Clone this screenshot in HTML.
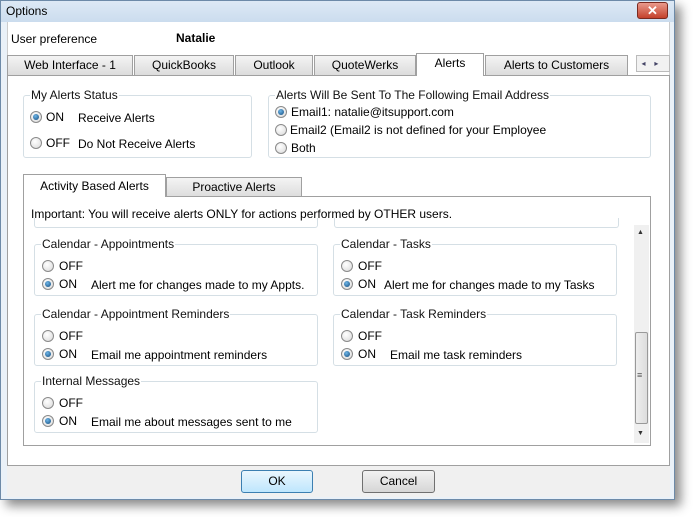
<!DOCTYPE html><html><head><style>
*{box-sizing:border-box}
body{margin:0;width:693px;height:517px;background:#fff;font-family:"Liberation Sans",sans-serif;font-size:12px;color:#000;position:relative;overflow:hidden}
.a{position:absolute}
.win{left:0;top:0;width:675px;height:500px;background:#eaf1f8;border:1px solid #6d8aa8;box-shadow:6px 6px 10px rgba(0,0,0,.45)}
.g{position:absolute;border:1px solid #d5dfe5;border-radius:3px}
.lg{position:absolute;top:-8px;left:6px;background:#fff;padding:0 1px;font-size:12px;color:#111}
.r{position:absolute;width:12px;height:12px;border-radius:50%;border:1px solid #8a8a8a;background:radial-gradient(circle at 40% 35%,#fff,#d8d8d8)}
.r.on::after{content:"";position:absolute;left:2px;top:2px;width:6px;height:6px;border-radius:50%;background:radial-gradient(circle at 40% 35%,#6fb6e8,#104a7c)}
.t{position:absolute;white-space:nowrap}
.tab{position:absolute;height:20px;border:1px solid #a0a0a0;border-bottom:none;background:linear-gradient(#f4f4f4,#dcdcdc);text-align:center;line-height:19px;font-size:12px}
.btn{position:absolute;height:23px;border:1px solid #707070;border-radius:3px;background:linear-gradient(#f2f2f2,#d6d6d6);text-align:center;line-height:21px}
</style></head><body>
<div class="a win"></div>
<div class="a" style="left:1px;top:1px;width:673px;height:21px;background:linear-gradient(#dde9f5,#cbdcee)"></div>
<div class="t" style="left:6px;top:4px">Options</div>
<div class="a" style="left:637px;top:2px;width:31px;height:17px;border:1px solid #7a2a20;border-radius:3px;background:linear-gradient(#e99a8c,#c4412c);color:#fff;text-align:center;font-weight:bold;line-height:15px;font-size:13px">✕</div>
<div class="a" style="left:7px;top:22px;width:663px;height:443px;background:#fff;border-left:1px solid #ccc;border-right:1px solid #ccc"></div>
<div class="a" style="left:7px;top:465px;width:663px;height:32px;background:#f0f0f0;border-top:1px solid #a0a0a0"></div>
<div class="t" style="left:11px;top:32px">User preference</div>
<div class="t" style="left:176px;top:31px;font-weight:bold">Natalie</div>
<div class="tab" style="left:7px;top:55px;width:126px">Web Interface - 1</div>
<div class="tab" style="left:134px;top:55px;width:100px">QuickBooks</div>
<div class="tab" style="left:235px;top:55px;width:78px">Outlook</div>
<div class="tab" style="left:314px;top:55px;width:102px">QuoteWerks</div>
<div class="tab" style="left:416px;top:53px;width:68px;height:23px;background:#fff;z-index:2">Alerts</div>
<div class="tab" style="left:485px;top:55px;width:143px">Alerts to Customers</div>
<div class="a" style="left:636px;top:55px;width:34px;height:17px;border:1px solid #bbb;background:#f2f2f2;font-size:8px;color:#446;line-height:15px">&nbsp;&nbsp;◂&nbsp;&nbsp;&nbsp;&nbsp;▸</div>
<div class="a" style="left:7px;top:75px;width:663px;height:391px;border:1px solid #a0a0a0;border-bottom:none"></div>

<div class="g" style="left:23px;top:95px;width:229px;height:63px"><span class="lg">My Alerts Status</span></div>
<div class="r on" style="left:30px;top:111px"></div><div class="t" style="left:46px;top:110px">ON</div><div class="t" style="left:78px;top:111px">Receive Alerts</div>
<div class="r" style="left:30px;top:137px"></div><div class="t" style="left:46px;top:136px">OFF</div><div class="t" style="left:78px;top:137px">Do Not Receive Alerts</div>

<div class="g" style="left:268px;top:95px;width:383px;height:63px"><span class="lg">Alerts Will Be Sent To The Following Email Address</span></div>
<div class="r on" style="left:275px;top:106px"></div><div class="t" style="left:291px;top:105px">Email1: natalie@itsupport.com</div>
<div class="r" style="left:275px;top:124px"></div><div class="t" style="left:290px;top:123px">Email2 (Email2 is not defined for your Employee</div>
<div class="r" style="left:275px;top:142px"></div><div class="t" style="left:291px;top:141px">Both</div>

<div class="tab" style="left:23px;top:174px;width:143px;height:23px;background:#fff;z-index:2;line-height:22px">Activity Based Alerts</div>
<div class="tab" style="left:166px;top:177px;width:136px">Proactive Alerts</div>
<div class="a" style="left:23px;top:196px;width:628px;height:250px;border:1px solid #a0a0a0"></div>
<div class="t" style="left:31px;top:207px">Important: You will receive alerts ONLY for actions performed by OTHER users.</div>
<div class="a" style="left:34px;top:218px;width:284px;height:10px;border:1px solid #d5dfe5;border-top:none;border-radius:0 0 3px 3px"></div>
<div class="a" style="left:334px;top:218px;width:285px;height:10px;border:1px solid #d5dfe5;border-top:none;border-radius:0 0 3px 3px"></div>
<div class="a" style="left:634px;top:225px;width:15px;height:218px;background:#f0f0f0"></div>
<div class="t" style="left:637px;top:229px;font-size:7px;color:#333">▲</div>
<div class="t" style="left:637px;top:430px;font-size:7px;color:#333">▼</div>
<div class="a" style="left:635px;top:332px;width:13px;height:92px;border:1px solid #999;border-radius:2px;background:linear-gradient(90deg,#eee,#ddd)"></div>
<div class="t" style="left:637px;top:370px;font-size:9px;color:#555">≡</div>

<div class="g" style="left:34px;top:244px;width:284px;height:52px"><span class="lg">Calendar - Appointments</span></div>
<div class="r" style="left:42px;top:260px"></div><div class="t" style="left:59px;top:259px">OFF</div>
<div class="r on" style="left:42px;top:278px"></div><div class="t" style="left:59px;top:277px">ON</div><div class="t" style="left:91px;top:278px">Alert me for changes made to my Appts.</div>
<div class="g" style="left:333px;top:244px;width:284px;height:52px"><span class="lg">Calendar - Tasks</span></div>
<div class="r" style="left:341px;top:260px"></div><div class="t" style="left:358px;top:259px">OFF</div>
<div class="r on" style="left:341px;top:278px"></div><div class="t" style="left:358px;top:277px">ON</div><div class="t" style="left:384px;top:278px">Alert me for changes made to my Tasks</div>

<div class="g" style="left:34px;top:314px;width:284px;height:52px"><span class="lg">Calendar - Appointment Reminders</span></div>
<div class="r" style="left:42px;top:330px"></div><div class="t" style="left:59px;top:329px">OFF</div>
<div class="r on" style="left:42px;top:348px"></div><div class="t" style="left:59px;top:347px">ON</div><div class="t" style="left:91px;top:348px">Email me appointment reminders</div>
<div class="g" style="left:333px;top:314px;width:284px;height:52px"><span class="lg">Calendar - Task Reminders</span></div>
<div class="r" style="left:341px;top:330px"></div><div class="t" style="left:358px;top:329px">OFF</div>
<div class="r on" style="left:341px;top:348px"></div><div class="t" style="left:358px;top:347px">ON</div><div class="t" style="left:390px;top:348px">Email me task reminders</div>

<div class="g" style="left:34px;top:381px;width:284px;height:52px"><span class="lg">Internal Messages</span></div>
<div class="r" style="left:42px;top:397px"></div><div class="t" style="left:59px;top:396px">OFF</div>
<div class="r on" style="left:42px;top:415px"></div><div class="t" style="left:59px;top:414px">ON</div><div class="t" style="left:91px;top:415px">Email me about messages sent to me</div>

<div class="btn" style="left:241px;top:470px;width:72px;border-color:#3c7fb1;background:linear-gradient(#eaf6fd,#bee6fd)">OK</div>
<div class="btn" style="left:362px;top:470px;width:73px">Cancel</div>
</body></html>
